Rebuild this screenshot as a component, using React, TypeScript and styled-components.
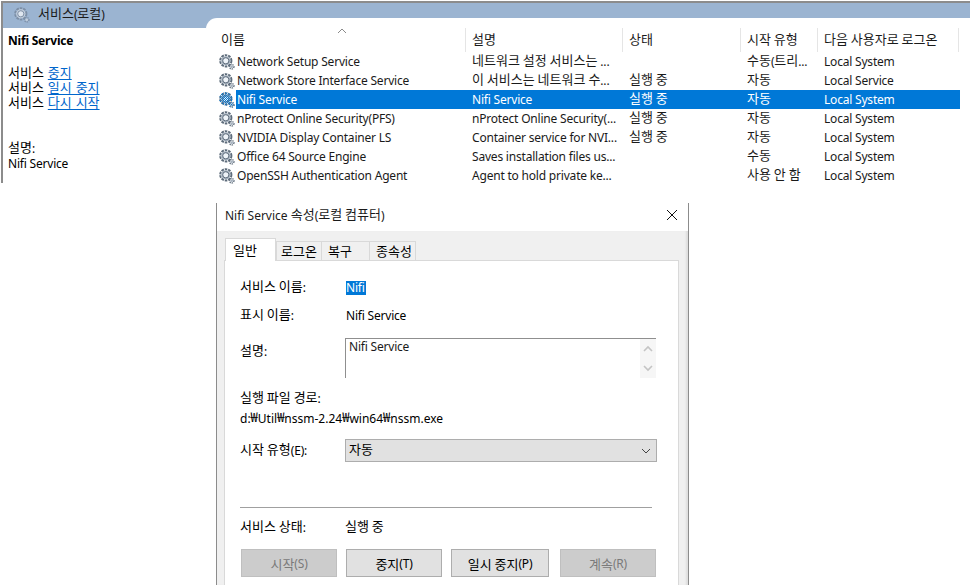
import React from "react";
import styled, { createGlobalStyle } from "styled-components";

const Global = createGlobalStyle`
  html, body { margin: 0; padding: 0; background: #fff; }
  body {
    width: 970px; height: 585px; overflow: hidden;
    font-family: "Noto Sans", "Noto Sans CJK KR", sans-serif;
    font-size: 12px; letter-spacing: -0.2px; color: #000;
  }
`;

const Ko = styled.span`
  font-family: "Noto Sans CJK KR", sans-serif; font-size: 13px; line-height: 1; letter-spacing: 0; vertical-align: 1px;
`;
const T: React.FC<{ children: string }> = ({ children }) => (
  <>
    {children.split(/([\uAC00-\uD7A3\u20A9][\uAC00-\uD7A3\u20A9 ]*)/).map((part, i) =>
      i % 2 === 1 ? <Ko key={i}>{part}</Ko> : part
    )}
  </>
);

const Page = styled.div`
  display: flex; flex-direction: column; width: 970px; height: 585px; overflow: hidden;
`;
const ServicesPanel = styled.section`
  display: grid; grid-template-columns: 203px 1fr; height: 180px; margin: 1px 0 0 1px;
  border-top: 2px solid #8c8c8c; border-left: 2px solid #8c8c8c;
`;
const LeftPane = styled.div`display: flex; flex-direction: column;`;
const LeftHeader = styled.header`
  display: flex; align-items: center; gap: 8px; height: 25px; padding: 0 0 2px 11px;
  background: #9bb4d1; color: #1a1a1a; box-sizing: border-box;
`;
const LeftBody = styled.div`display: flex; flex-direction: column; padding: 5px 0 0 5px; line-height: 15px;`;
const ServiceName = styled.strong`font-weight: 700; height: 25px;`;
const ActionLine = styled.div<{ $first?: boolean }>`
  height: 15px; word-spacing: 1px; margin-top: ${(p) => (p.$first ? 7 : 0)}px;
`;
const ActionLink = styled.a`color: #0066cc; text-decoration: underline;`;
const DescLabel = styled.div`margin-top: 30px;`;

const RightPane = styled.div`display: flex; flex-direction: column; background: #9bb4d1; padding-top: 15px;`;
const ListBox = styled.div`
  flex: 1; background: #fff; border-top-left-radius: 11px; padding: 10px 0 0 13px;
  display: flex; flex-direction: column;
`;
const HeaderRow = styled.div`
  display: grid; grid-template-columns: 247px 157px 118px 77px 141px; height: 24px; width: 740px;
`;
const HeaderCell = styled.div<{ $first?: boolean }>`
  position: relative; display: flex; align-items: center; padding: 0 0 3px ${(p) => (p.$first ? 2 : 6)}px;
  box-sizing: border-box; border-right: 1px solid #e5e5e5; height: 24px; color: #1a1a1a;
`;
const SortMark = styled.div`position: absolute; top: 0; left: 118px; display: flex;`;
const Row = styled.div`display: flex; height: 19px; align-items: center;`;
const IconSlot = styled.div`width: 17px; height: 16px; flex: none; display: flex;`;
const RowBody = styled.div<{ $selected?: boolean }>`
  display: grid; grid-template-columns: 230px 157px 118px 77px 142px; height: 19px; align-items: center;
  background: ${(p) => (p.$selected ? "#0078d7" : "transparent")};
  color: ${(p) => (p.$selected ? "#fff" : "#1a1a1a")};
`;
const Cell = styled.div<{ $first?: boolean }>`
  padding-left: ${(p) => (p.$first ? "1px" : "6px")}; white-space: nowrap;
`;

const Dialog = styled.section`
  display: flex; flex-direction: column; box-sizing: border-box; width: 473px; height: 382px;
  margin: 20px 0 0 216px; border-left: 1px solid #8c8c8c; border-right: 1px solid #8c8c8c;
`;
const TitleBar = styled.header`
  display: flex; align-items: center; justify-content: space-between; height: 28px; padding: 0 10px 4px 8px;
  box-sizing: border-box; color: #1a1a1a; letter-spacing: 0;
`;
const TabBand = styled.div`
  display: flex; flex-direction: column; flex: 1; background: #f0f0f0; padding: 8px 9px 0 7px;
  box-shadow: inset -3px 0 2px -1px rgba(0, 0, 0, 0.08);
`;
const Tabs = styled.div`display: flex; align-items: flex-end; height: 22px; padding-left: 1px; margin-bottom: -1px;`;
const Tab = styled.div<{ $active?: boolean; $w: number; $pad: number }>`
  box-sizing: border-box; width: ${(p) => p.$w}px; height: ${(p) => (p.$active ? 23 : 20)}px;
  padding: 0 0 1px ${(p) => p.$pad}px; display: flex; align-items: center;
  background: ${(p) => (p.$active ? "#fff" : "#f0f0f0")};
  border: 1px solid #d9d9d9; border-bottom: ${(p) => (p.$active ? "none" : "1px solid #d9d9d9")};
  margin-right: ${(p) => (p.$active ? 0 : -1)}px; position: relative; z-index: ${(p) => (p.$active ? 1 : 0)};
`;
const TabPanel = styled.div`
  flex: 1; background: #fff; border: 1px solid #d9d9d9; border-bottom: none;
  padding: 12px 21px 0 15px; display: flex; flex-direction: column;
`;
const FieldRow = styled.div`display: grid; grid-template-columns: 105px 1fr; height: 28px; align-items: center;`;
const Selected = styled.span`
  background: #0078d7; color: #fff; margin-left: 1px; display: inline-block; line-height: 14px; width: 20px;
`;
const Indented = styled.span`padding-left: 1px;`;
const DescRow = styled.div`display: grid; grid-template-columns: 105px 1fr; height: 40px; margin-top: 9px;`;
const DescFieldLabel = styled.div`padding-top: 5px; line-height: 16px;`;
const DescBox = styled.div`
  display: flex; justify-content: space-between; width: 311px; border-top: 1px solid #8f8f8f; border-left: 1px solid #8f8f8f;
  box-sizing: border-box; padding-left: 3px; line-height: 15px; color: #1a1a1a;
`;
const FakeScroll = styled.div`
  width: 16px; background: #f6f6f6; display: flex; flex-direction: column; align-items: center; justify-content: space-around;
  height: 39px;
`;
const PathLabel = styled.div`margin-top: 11px; height: 20px; line-height: 20px;`;
const PathValue = styled.div`height: 20px; line-height: 20px; letter-spacing: 0;`;
const SelectRow = styled.div`display: grid; grid-template-columns: 105px 1fr; height: 22px; margin-top: 10px; align-items: center;`;
const SelectBox = styled.div`
  box-sizing: border-box; width: 312px; height: 23px; display: flex; align-items: center; justify-content: space-between;
  background: #e1e1e1; border: 1px solid #adadad; padding: 0 5px 0 3px;
`;
const Divider = styled.hr`width: 412px; margin: 46px 0 0; border: none; border-top: 1px solid #a0a0a0;`;
const StatusRow = styled.div`display: grid; grid-template-columns: 105px 1fr; height: 20px; margin-top: 9px; align-items: center;`;
const Buttons = styled.div`
  display: grid; grid-template-columns: 96px 96px 98px 96px; gap: 9px; margin: 12px 0 0 1px; height: 28px;
  & > :nth-child(4) { margin: 0 -2px 0 2px; }
`;
const Btn = styled.div<{ $off?: boolean }>`
  box-sizing: border-box; height: 28px; display: flex; align-items: center; justify-content: center;
  background: ${(p) => (p.$off ? "#cccccc" : "#e1e1e1")}; border: 1px solid ${(p) => (p.$off ? "#bfbfbf" : "#adadad")};
  color: ${(p) => (p.$off ? "#7a7a7a" : "#000")};
`;

const GearShapes: React.FC<{ dark: string; mid: string; hole: string; small: string }> = ({ dark, mid, hole, small }) => (
  <>
    <circle cx="6.8" cy="6.8" r="5.6" fill="none" stroke={dark} strokeWidth="2" strokeDasharray="2.6 0.92" />
    <circle cx="6.8" cy="6.8" r="4.6" fill={mid} />
    <circle cx="6.8" cy="6.8" r="3.1" fill={hole} stroke={dark} strokeWidth="1" />
    <circle cx="12.7" cy="12.7" r="2.2" fill="none" stroke={dark} strokeWidth="1.5" strokeDasharray="1.2 0.8" />
    <circle cx="12.7" cy="12.7" r="1.3" fill={small} />
  </>
);

const Gear: React.FC<{ selected?: boolean; light?: boolean }> = ({ selected, light }) => {
  const dark = light ? "#7d8fa6" : "#5f6d7c";
  const mid = light ? "#c3cedb" : "#a6b2bf";
  const hole = light ? "#dfe7f0" : "#eef3f8";
  return (
    <svg width="16" height="16" viewBox="0 0 16 16">
      <GearShapes dark={dark} mid={mid} hole={hole} small={mid} />
      {selected && (
        <>
          <defs>
            <pattern id="dither" width="2" height="2" patternUnits="userSpaceOnUse">
              <rect width="1" height="1" fill="#0078d7" />
              <rect x="1" y="1" width="1" height="1" fill="#0078d7" />
            </pattern>
          </defs>
          <GearShapes dark="url(#dither)" mid="url(#dither)" hole="url(#dither)" small="url(#dither)" />
        </>
      )}
    </svg>
  );
};

const Chevron = () => (
  <svg width="10" height="6" viewBox="0 0 10 6">
    <path d="M1 5 L5 1 L9 5" fill="none" stroke="#8a8a8a" strokeWidth="1" />
  </svg>
);

const services = [
  ["Network Setup Service", "네트워크 설정 서비스는 ...", "", "수동(트리...", "Local System"],
  ["Network Store Interface Service", "이 서비스는 네트워크 수...", "실행 중", "자동", "Local Service"],
  ["Nifi Service", "Nifi Service", "실행 중", "자동", "Local System"],
  ["nProtect Online Security(PFS)", "nProtect Online Security(...", "실행 중", "자동", "Local System"],
  ["NVIDIA Display Container LS", "Container service for NVI...", "실행 중", "자동", "Local System"],
  ["Office 64 Source Engine", "Saves installation files us...", "", "수동", "Local System"],
  ["OpenSSH Authentication Agent", "Agent to hold private ke...", "", "사용 안 함", "Local System"],
];

const tabs = [
  { label: "일반", w: 51, pad: 7, active: true },
  { label: "로그온", w: 46, pad: 4 },
  { label: "복구", w: 49, pad: 6 },
  { label: "종속성", w: 47, pad: 6 },
];

export default function App() {
  return (
    <Page>
      <Global />
      <ServicesPanel>
        <LeftPane>
          <LeftHeader>
            <Gear light />
            <span><T>서비스(로컬)</T></span>
          </LeftHeader>
          <LeftBody>
            <ServiceName>Nifi Service</ServiceName>
            <ActionLine $first><T>서비스 </T><ActionLink><T>중지</T></ActionLink></ActionLine>
            <ActionLine><T>서비스 </T><ActionLink><T>일시 중지</T></ActionLink></ActionLine>
            <ActionLine><T>서비스 </T><ActionLink><T>다시 시작</T></ActionLink></ActionLine>
            <DescLabel><T>설명:</T></DescLabel>
            <div>Nifi Service</div>
          </LeftBody>
        </LeftPane>
        <RightPane>
          <ListBox>
            <HeaderRow>
              <HeaderCell $first>
                <T>이름</T>
                <SortMark><Chevron /></SortMark>
              </HeaderCell>
              <HeaderCell><T>설명</T></HeaderCell>
              <HeaderCell><T>상태</T></HeaderCell>
              <HeaderCell><T>시작 유형</T></HeaderCell>
              <HeaderCell><T>다음 사용자로 로그온</T></HeaderCell>
            </HeaderRow>
            {services.map((s) => {
              const sel = s[0] === "Nifi Service";
              return (
                <Row key={s[0]}>
                  <IconSlot><Gear selected={sel} /></IconSlot>
                  <RowBody $selected={sel}>
                    {s.map((c, i) => (
                      <Cell key={i} $first={i === 0}><T>{c}</T></Cell>
                    ))}
                  </RowBody>
                </Row>
              );
            })}
          </ListBox>
        </RightPane>
      </ServicesPanel>
      <Dialog>
        <TitleBar>
          <span><T>Nifi Service 속성(로컬 컴퓨터)</T></span>
          <svg width="12" height="12" viewBox="0 0 12 12">
            <path d="M1 1 L11 11 M11 1 L1 11" stroke="#111" strokeWidth="1" fill="none" />
          </svg>
        </TitleBar>
        <TabBand>
          <Tabs>
            {tabs.map((t) => (
              <Tab key={t.label} $active={t.active} $w={t.w} $pad={t.pad}><T>{t.label}</T></Tab>
            ))}
          </Tabs>
          <TabPanel>
            <FieldRow>
              <span><T>서비스 이름:</T></span>
              <span><Selected>Nifi</Selected></span>
            </FieldRow>
            <FieldRow>
              <span><T>표시 이름:</T></span>
              <Indented>Nifi Service</Indented>
            </FieldRow>
            <DescRow>
              <DescFieldLabel><T>설명:</T></DescFieldLabel>
              <DescBox>
                <span>Nifi Service</span>
                <FakeScroll>
                  <svg width="10" height="7" viewBox="0 0 10 7"><path d="M1 6 L5 2 L9 6" fill="none" stroke="#c4c4c4" strokeWidth="1.6" /></svg>
                  <svg width="10" height="7" viewBox="0 0 10 7"><path d="M1 1 L5 5 L9 1" fill="none" stroke="#c4c4c4" strokeWidth="1.6" /></svg>
                </FakeScroll>
              </DescBox>
            </DescRow>
            <PathLabel><T>실행 파일 경로:</T></PathLabel>
            <PathValue><T>d:₩Util₩nssm-2.24₩win64₩nssm.exe</T></PathValue>
            <SelectRow>
              <span><T>시작 유형(E):</T></span>
              <SelectBox>
                <span><T>자동</T></span>
                <svg width="10" height="6" viewBox="0 0 10 6"><path d="M1 1 L5 5 L9 1" fill="none" stroke="#444" strokeWidth="1" /></svg>
              </SelectBox>
            </SelectRow>
            <Divider />
            <StatusRow>
              <span><T>서비스 상태:</T></span>
              <span><T>실행 중</T></span>
            </StatusRow>
            <Buttons>
              <Btn $off><T>시작(S)</T></Btn>
              <Btn><T>중지(T)</T></Btn>
              <Btn><T>일시 중지(P)</T></Btn>
              <Btn $off><T>계속(R)</T></Btn>
            </Buttons>
          </TabPanel>
        </TabBand>
      </Dialog>
    </Page>
  );
}
